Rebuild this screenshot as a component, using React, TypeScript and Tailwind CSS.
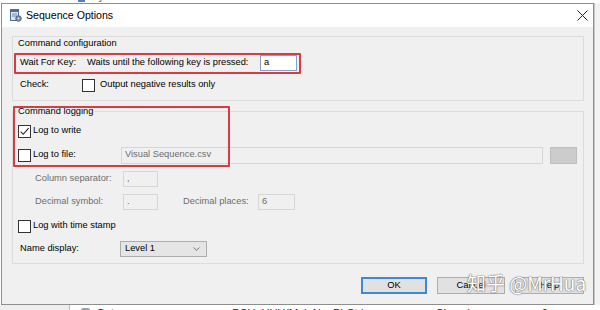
import React from "react";

function Box({ checked }: { checked?: boolean }) {
  return (
    <div className="w-[13px] h-[13px] border border-[#333333] bg-white flex items-center justify-center shrink-0">
      {checked && (
        <svg width="11" height="11" viewBox="0 0 11 11">
          <path d="M1.6 5.6 L4.2 8.3 L9.6 2.2" fill="none" stroke="#222" strokeWidth="1.1" />
        </svg>
      )}
    </div>
  );
}

function TitleIcon() {
  return (
    <svg width="13" height="13" viewBox="0 0 13 13">
      <rect x="1.5" y="0.5" width="8" height="11" fill="#dbe6f2" stroke="#4b6f98" />
      <rect x="1.5" y="0.5" width="8" height="2.5" fill="#4b6f98" />
      <line x1="3" y1="5" x2="8" y2="5" stroke="#6e8db2" />
      <line x1="3" y1="7" x2="8" y2="7" stroke="#6e8db2" />
      <circle cx="9.5" cy="9.5" r="2.8" fill="#7d8a99" stroke="#4e5a68" strokeWidth="0.8" />
      <circle cx="9.5" cy="9.5" r="1" fill="#dfe6ee" />
    </svg>
  );
}

export default function App() {
  return (
    <div className="w-[600px] h-[310px] overflow-hidden bg-[#f4f4f4] relative flex flex-col font-['Liberation_Sans',Arial,sans-serif] text-[9.3px] text-black">
      {/* background window top strip */}
      <div className="h-[3px] overflow-hidden bg-white shrink-0">
        <div className="-mt-[10px] flex items-start text-[11px] leading-[12px] whitespace-nowrap opacity-80">
          <span className="ml-[30px] text-[#333]">ewe</span>
          <span className="ml-[28px] mt-[2px] w-[7px] h-[10px] bg-[#2d5fa8]" />
          <span className="ml-[6px] text-[#333]">System</span>
          <span className="ml-[38px] text-[#4a4aa2]">01-0003 CAN 2: ICIassical CANbus with 2 000 Bits</span>
        </div>
      </div>

      <div className="flex h-[302px] shrink-0">
        <div className="w-[1px] bg-white" />
        {/* dialog */}
        <div className="w-[593px] border border-[#8e8e8e] flex flex-col bg-[#f0f0f0]">
          {/* title bar */}
          <div className="h-[23px] bg-white flex items-center pl-[7px] pr-[5px] shrink-0">
            <TitleIcon />
            <span className="ml-[4px] text-[10.6px] text-black">Sequence Options</span>
            <div className="flex-1" />
            <svg width="11" height="11" viewBox="0 0 11 11">
              <path d="M0.5 0.5 L10.5 10.5 M10.5 0.5 L0.5 10.5" stroke="#222" strokeWidth="1" />
            </svg>
          </div>

          {/* body */}
          <div className="flex-1 relative pl-[10px] pr-[9px] pt-[9px] flex flex-col">
            {/* group 1 */}
            <div className="h-[65px] border border-[#dcdcdc] flex flex-col">
              <div className="h-[14px] flex items-center pl-[5px]">Command configuration</div>
              <div className="mt-[2px] h-[20px] flex items-center pl-[7px]">
                <span className="w-[67px]">Wait For Key:</span>
                <span className="w-[173px]">Waits until the following key is pressed:</span>
                <div className="w-[37px] h-[16px] border border-[#8a9fbd] bg-white flex items-center pl-[3px]">a</div>
              </div>
              <div className="mt-[4px] h-[16px] flex items-center pl-[7px]">
                <span className="w-[62px]">Check:</span>
                <Box />
                <span className="ml-[5px]">Output negative results only</span>
              </div>
            </div>

            {/* group 2 */}
            <div className="mt-[10px] h-[153px] border border-[#dcdcdc] flex flex-col">
              <div className="-mt-[7px] h-[14px] flex items-center pl-[4px]">
                <span className="bg-[#f0f0f0] px-[1px]">Command logging</span>
              </div>
              <div className="mt-[4px] h-[16px] flex items-center pl-[5px]">
                <Box checked />
                <span className="ml-[2px]">Log to write</span>
              </div>
              <div className="mt-[7px] h-[18px] flex items-center pl-[5px]">
                <div className="w-[103px] flex items-center">
                  <Box />
                  <span className="ml-[2px]">Log to file:</span>
                </div>
                <div className="w-[422px] h-[17px] border border-[#d6d6d6] flex items-center pl-[3px] text-[#6d6d6d]">
                  Visual Sequence.csv
                </div>
                <div className="ml-[7px] w-[27px] h-[17px] bg-[#cccccc] border border-[#bfbfbf]" />
              </div>
              <div className="mt-[7px] h-[16px] flex items-center pl-[22px] text-[#6d6d6d]">
                <span className="w-[88px]">Column separator:</span>
                <div className="w-[35px] h-[16px] border border-[#d6d6d6] flex items-center pl-[3px]">,</div>
              </div>
              <div className="mt-[7px] h-[16px] flex items-center pl-[22px] text-[#6d6d6d]">
                <span className="w-[88px]">Decimal symbol:</span>
                <div className="w-[35px] h-[16px] border border-[#d6d6d6] flex items-center pl-[3px]">.</div>
                <span className="ml-[25px] w-[75px]">Decimal places:</span>
                <div className="w-[37px] h-[16px] border border-[#d6d6d6] flex items-center pl-[3px]">6</div>
              </div>
              <div className="mt-[8px] h-[16px] flex items-center pl-[5px]">
                <Box />
                <span className="ml-[2px]">Log with time stamp</span>
              </div>
              <div className="mt-[7px] h-[16px] flex items-center pl-[7px]">
                <span className="w-[100px]">Name display:</span>
                <div className="w-[87px] h-[16px] border border-[#adadad] bg-[#e5e5e5] flex items-center pl-[4px] pr-[6px]">
                  <span className="flex-1">Level 1</span>
                  <svg width="7" height="4" viewBox="0 0 7 4">
                    <path d="M0.5 0.5 L3.5 3.3 L6.5 0.5" fill="none" stroke="#6a6a6a" strokeWidth="0.9" />
                  </svg>
                </div>
              </div>
            </div>

            {/* buttons */}
            <div className="mt-[13px] flex justify-end gap-[10px]">
              <div className="w-[66px] h-[17px] border-2 border-[#3c8ad6] bg-[#e1e1e1] flex items-center justify-center">OK</div>
              <div className="w-[68px] h-[17px] border border-[#adadad] bg-[#e1e1e1] flex items-center justify-center">Cancel</div>
              <div className="w-[69px] h-[17px] border border-[#adadad] bg-[#e1e1e1] flex items-center justify-center">Help</div>
            </div>

            {/* red annotation boxes */}
            <div className="absolute left-[12px] top-[26px] w-[287px] h-[21px] border-2 border-[#d83b44] rounded-[1px]" />
            <div className="absolute left-[11px] top-[79px] w-[217px] h-[61px] border-2 border-[#d83b44] rounded-[1px]" />
          </div>
        </div>
        <div className="flex-1 bg-[#f2f2f2] border-l border-[#c8c8c8]" />
      </div>

      {/* background window bottom strip */}
      <div className="flex-1 overflow-hidden bg-white flex items-start">
        <div className="w-[70px] h-full bg-[#eeeeee] border-r border-[#b8b8b8]" />
        <div className="flex items-start text-[11px] leading-[12px] whitespace-nowrap mt-[2px]">
          <span className="ml-[11px] mt-[1px] w-[9px] h-[6px] bg-[#9aa3ad] rounded-[2px]" />
          <span className="ml-[7px] font-bold text-[#222]">Set</span>
          <span className="ml-[118px] text-[#222]">PCU_UUU(MainNonPbCtrl</span>
          <span className="ml-[72px] text-[#222]">Closed</span>
          <span className="ml-[72px] text-[#222]">0</span>
        </div>
      </div>

      {/* watermark */}
      <div className="absolute left-[467px] top-[272px] text-[19px] leading-[22px] text-white font-['Noto_Sans_CJK_SC','Liberation_Sans',sans-serif] [text-shadow:0_0_1px_#707070,0_0_1px_#707070,0_0_2px_rgba(120,120,120,0.6)] whitespace-nowrap">
        知乎 @MrHua
      </div>
    </div>
  );
}
